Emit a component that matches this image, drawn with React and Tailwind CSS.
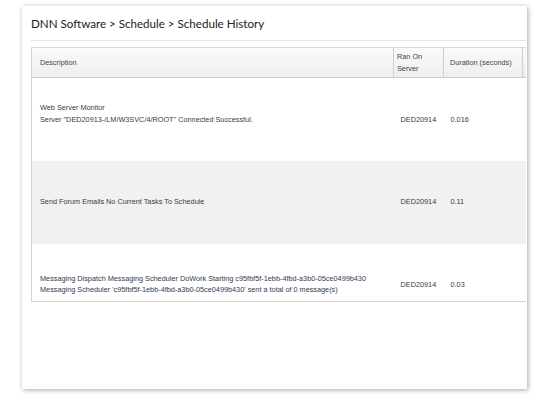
// Schedule history view: card with breadcrumb title and a clipped history table.

const rows = [
    {
        lines: ["Web Server Monitor", 'Server "DED20913-/LM/W3SVC/4/ROOT" Connected Successful.', "\u00a0"],
        server: "DED20914",
        duration: "0.016",
        rowClass: "h-[83px] bg-white",
        cellClass: "",
        textClass: "text-[#3b3b3b]",
    },
    {
        lines: ["Send Forum Emails No Current Tasks To Schedule"],
        server: "DED20914",
        duration: "0.11",
        rowClass: "h-[83px] bg-[#f1f1f1]",
        cellClass: "",
        textClass: "text-[#3b3b3b]",
    },
    {
        lines: [
            "Messaging Dispatch Messaging Scheduler DoWork Starting c95fbf5f-1ebb-4fbd-a3b0-05ce0499b430",
            "Messaging Scheduler 'c95fbf5f-1ebb-4fbd-a3b0-05ce0499b430' sent a total of 0 message(s)",
        ],
        server: "DED20914",
        duration: "0.03",
        rowClass: "h-[58px] bg-white",
        cellClass: "pt-[24px]",
        textClass: "text-[#2f3b52]",
    },
];

export default function App() {
    return (
        <div className="h-[405px] w-[550px] bg-white pl-[22px] pt-[6px]">
            <div className="h-[383px] w-[505px] bg-white pl-[9px] pr-[1px] shadow-[1px_1px_5px_rgba(0,0,0,0.35)]">
                <h1 className="pt-[9px] pb-[7px] text-[11.6px] leading-[18px] text-[#222] font-['Lato',sans-serif]">
                    DNN Software &gt; Schedule &gt; Schedule History
                </h1>
                <div className="h-px bg-[#e6e6e6]" />
                <div className="mt-[6px] w-[495px] overflow-hidden">
                    <table className="w-[560px] table-fixed border-collapse border border-[#d6d6d6] font-['Liberation_Sans',Arial,sans-serif] text-[7.3px] leading-[11.5px]">
                        <colgroup>
                            <col className="w-[362px]" />
                            <col className="w-[50px]" />
                            <col className="w-[79px]" />
                            <col className="w-[69px]" />
                        </colgroup>
                        <thead>
                            <tr className="h-[30px] bg-gradient-to-b from-[#fafafa] to-[#eeeeee] text-left text-[#444]">
                                <th className="border-b border-[#cfcfcf] pl-[8px] font-normal">Description</th>
                                <th className="border-b border-l border-[#cfcfcf] pl-[3px] font-normal">Ran On Server</th>
                                <th className="border-b border-l border-[#cfcfcf] pl-[6px] font-normal">Duration (seconds)</th>
                                <th className="border-b border-l border-[#cfcfcf] pl-[6px] font-normal" />
                            </tr>
                        </thead>
                        <tbody>
                            {rows.map((row, rowIndex) => (
                                <tr key={rowIndex} className={row.rowClass}>
                                    <td className={`pl-[8px] align-middle whitespace-nowrap ${row.cellClass} ${row.textClass}`}>
                                        {row.lines.map((line, lineIndex) => (
                                            <div key={lineIndex}>{line}</div>
                                        ))}
                                    </td>
                                    <td className={`pl-[7px] align-middle text-[#3b3b3b] ${row.cellClass}`}>{row.server}</td>
                                    <td className={`pl-[7px] align-middle text-[#3b3b3b] ${row.cellClass}`}>{row.duration}</td>
                                    <td className={`align-middle ${row.cellClass}`} />
                                </tr>
                            ))}
                        </tbody>
                    </table>
                </div>
            </div>
        </div>
    );
}
